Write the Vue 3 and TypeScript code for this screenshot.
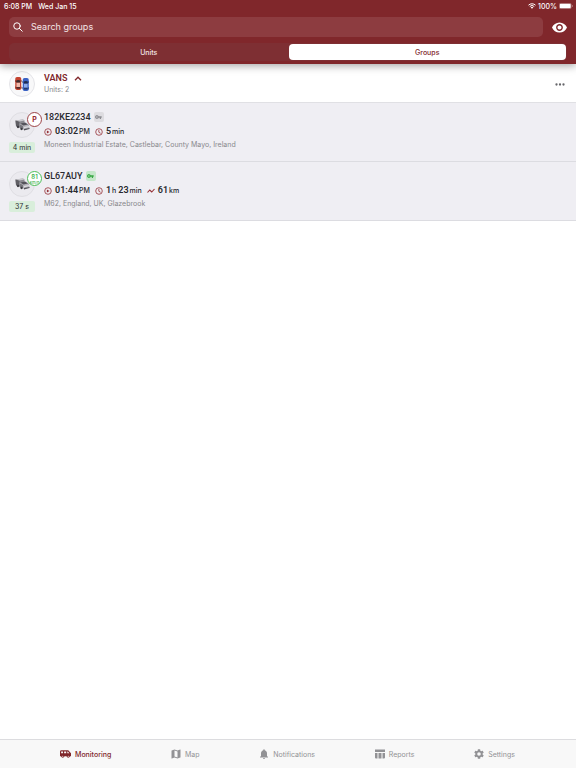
<script setup lang="ts">
import { ref } from 'vue'

interface Metric { icon: 'parking' | 'clock' | 'trip'; parts: [string, string][] }
interface Unit {
  name: string
  online: boolean
  badge: string[]
  age: string
  metrics: Metric[]
  address: string
}

const query = ref('')
const mode = ref<'Units' | 'Groups'>('Groups')
const expanded = ref(true)
const active = ref('Monitoring')

const units: Unit[] = [
  {
    name: '182KE2234',
    online: false,
    badge: ['P'],
    age: '4 min',
    metrics: [
      { icon: 'parking', parts: [['03:02', 'PM']] },
      { icon: 'clock', parts: [['5', 'min']] },
    ],
    address: 'Moneen Industrial Estate, Castlebar, County Mayo, Ireland',
  },
  {
    name: 'GL67AUY',
    online: true,
    badge: ['81', 'km/h'],
    age: '37 s',
    metrics: [
      { icon: 'parking', parts: [['01:44', 'PM']] },
      { icon: 'clock', parts: [['1', 'h'], ['23', 'min']] },
      { icon: 'trip', parts: [['61', 'km']] },
    ],
    address: 'M62, England, UK, Glazebrook',
  },
]

const tabs = ['Monitoring', 'Map', 'Notifications', 'Reports', 'Settings']
</script>

<template>
  <div class="app">
    <header class="top">
      <div class="status">
        <span>6:08 PM</span>
        <span>Wed Jan 15</span>
        <span class="status-right">
          <svg class="wifi" viewBox="0 0 16 12"><path d="M1 4.4a10 10 0 0 1 14 0M3.5 7a6.4 6.4 0 0 1 9 0" fill="none" stroke="currentColor" stroke-width="2" /><path d="M5.4 8.8a3.8 3.8 0 0 1 5.2 0L8 11.6z" fill="currentColor" /></svg>
          <span>100%</span>
          <svg class="battery" viewBox="0 0 28 12"><rect x=".5" y=".5" width="24" height="11" rx="3" fill="none" stroke="currentColor" opacity=".5" /><rect x="1.5" y="1.5" width="22" height="9" rx="2" fill="currentColor" /><path d="M26 4v4c2-.6 2-3.400 0-4z" fill="currentColor" opacity=".6" /></svg>
        </span>
      </div>
      <div class="search-row">
        <label class="search">
          <svg viewBox="0 0 20 20" fill="none" stroke="currentColor" stroke-width="2" stroke-linecap="round"><circle cx="8" cy="8" r="6.500" /><path d="M12.700 12.700 18.500 18.500" /></svg>
          <input v-model="query" type="text" placeholder="Search groups" aria-label="Search groups" />
        </label>
        <button class="eye" aria-label="Visibility">
          <svg viewBox="1 4 22 16"><path fill="currentColor" d="M12 4.500C7 4.500 2.730 7.610 1 12c1.730 4.390 6 7.500 11 7.500s9.270-3.110 11-7.500c-1.730-4.390-6-7.500-11-7.500zM12 17c-2.760 0-5-2.240-5-5s2.240-5 5-5 5 2.240 5 5-2.240 5-5 5zm0-8a3 3 0 1 0 0 6 3 3 0 0 0 0-6z" /></svg>
        </button>
      </div>
      <div class="segments">
        <button :class="{ on: mode === 'Units' }" @click="mode = 'Units'">Units</button>
        <button :class="{ on: mode === 'Groups' }" @click="mode = 'Groups'">Groups</button>
      </div>
    </header>

    <main class="content">
      <section class="group">
        <div class="avatar">
          <svg class="cars" viewBox="0 0 28 28">
            <g fill="#4a3a3c"><rect x="0" y="6" width="13" height="4" rx="1" /><rect x="0" y="19" width="13" height="4" rx="1" /></g>
            <g fill="#2d3554"><rect x="15" y="8" width="13" height="4" rx="1" /><rect x="15" y="20" width="13" height="4" rx="1" /></g>
            <rect x=".5" y="0" width="12" height="26" rx="3.500" fill="#c4432f" /><path d="M2 7.500q4.500-3 9 0l-1 4H3z" fill="#3c2a2e" /><rect x="3" y="11.500" width="7" height="8.500" fill="#efb9ab" /><path d="M2.500 20h8l-.5 3.500H3z" fill="#54292a" />
            <rect x="15.500" y="2" width="12" height="26" rx="3.500" fill="#3a62c4" /><path d="M17 9.500q4.500-3 9 0l-1 4h-7z" fill="#202b4d" /><rect x="18" y="13.500" width="7" height="8" fill="#8fadea" /><path d="M17.500 21.500h8l-.5 3.500h-7z" fill="#253765" />
          </svg>
        </div>
        <div class="group-info">
          <button class="group-name" :aria-expanded="expanded" @click="expanded = !expanded">
            <span>VANS</span>
            <svg :class="{ closed: !expanded }" viewBox="0 0 16 10"><path d="M2 8.500 8 2.500 14 8.500" fill="none" stroke="currentColor" stroke-width="2.600" /></svg>
          </button>
          <div class="group-count">Units: 2</div>
        </div>
        <button class="more" aria-label="More">
          <svg viewBox="0 0 20 6" fill="currentColor"><circle cx="3" cy="3" r="2.300" /><circle cx="10" cy="3" r="2.300" /><circle cx="17" cy="3" r="2.300" /></svg>
        </button>
      </section>

      <ul v-if="expanded" class="units">
        <li v-for="u in units" :key="u.name" class="unit">
          <div class="unit-side">
            <div class="avatar">
              <svg class="van" viewBox="0 0 30 26">
                <path d="M1 3 16 1l3 2v13l-8 2L2 15z" fill="#8b8a90" />
                <path d="m1 3 8 2v12l-7-3z" fill="#5f5e64" />
                <path d="M1 3 16 1l3 2-10 2z" fill="#c9c8cd" />
                <path d="m9 9 11-2 8 4 1 8-10 3-9-3z" fill="#b3b2b8" />
                <path d="m10 9 10-2 6 4-9 2z" fill="#54535a" />
                <path d="m10 11 6 3v7l-6-3z" fill="#77767c" />
                <path d="m18 16 10-2v2l-10 3z" fill="#dedde1" />
                <path d="m18 20 11-2v2l-11 3z" fill="#55545a" />
                <circle cx="6" cy="16" r="2.300" fill="#3b3a40" /><circle cx="13" cy="20" r="2.300" fill="#3b3a40" />
              </svg>
              <div class="badge" :class="{ moving: u.online }"><span v-for="b in u.badge" :key="b">{{ b }}</span></div>
            </div>
            <span class="age">{{ u.age }}</span>
          </div>
          <div class="unit-info">
            <div class="unit-name">
              <span>{{ u.name }}</span>
              <span class="key" :class="{ live: u.online }">
                <svg viewBox="0 0 22 12"><path fill="currentColor" fill-rule="evenodd" d="M11.700 4A6 6 0 1 0 11.700 8H15v4h4V8h2V4zM6 8a2 2 0 1 1 0-4 2 2 0 0 1 0 4z" /></svg>
              </span>
            </div>
            <div class="metrics">
              <span v-for="m in u.metrics" :key="m.icon" class="metric">
                <svg v-if="m.icon === 'parking'" viewBox="0 0 16 16"><circle cx="8" cy="8" r="6.600" fill="none" stroke="currentColor" stroke-width="1.600" /><path d="M5.800 4.800 11 8l-5.200 3.200z" fill="currentColor" /></svg>
                <svg v-else-if="m.icon === 'clock'" viewBox="0 0 16 16" fill="none" stroke="currentColor" stroke-width="1.600"><circle cx="8" cy="8" r="6.600" /><path d="M7.700 4v4.500l3.500 2" /></svg>
                <svg v-else viewBox="0 0 16 16" fill="none" stroke="currentColor" stroke-width="2.200"><path d="m1 11 4.500-5 4 4L15 4" /></svg>
                <span class="parts">
                  <span v-for="p in m.parts" :key="p[1]" class="part"><b>{{ p[0] }}</b><small>{{ p[1] }}</small></span>
                </span>
              </span>
            </div>
            <div class="address">{{ u.address }}</div>
          </div>
        </li>
      </ul>
    </main>

    <nav class="tabbar">
      <button v-for="t in tabs" :key="t" :class="{ on: active === t }" @click="active = t">
        <svg v-if="t === 'Monitoring'" class="bus" viewBox="0 0 24 16"><path fill="currentColor" fill-rule="evenodd" d="M3 0h15l6 6.500V13H0V3a3 3 0 0 1 3-3zm-.5 2.500v4h4v-4zm6.500 0v4h4.500v-4zm7 0v4h4.500l-3.500-4z" /><g fill="currentColor"><circle cx="6" cy="12.800" r="3.200" /><circle cx="18" cy="12.800" r="3.200" /></g><g fill="#f8f8f8"><circle cx="6" cy="12.800" r="1.200" /><circle cx="18" cy="12.800" r="1.200" /></g></svg>
        <svg v-else-if="t === 'Map'" viewBox="2 2 20 20"><path fill="currentColor" d="m20.500 3-.16.030L15 5.100 9 3 3.360 4.900a.5.5 0 0 0-.36.480V20.500a.5.5 0 0 0 .66.470L9 18.900l6 2.100 5.640-1.900a.5.5 0 0 0 .36-.480V3.500a.5.5 0 0 0-.5-.5zM15 19l-6-2.110V5l6 2.110z" /></svg>
        <svg v-else-if="t === 'Notifications'" viewBox="2 2 20 20"><path fill="currentColor" d="M12 22a2 2 0 0 0 2-2h-4a2 2 0 0 0 2 2zm6-6v-5c0-3.070-1.640-5.640-4.500-6.320V4a1.500 1.500 0 0 0-3 0v.680C7.630 5.360 6 7.920 6 11v5l-2 2v1h16v-1z" /></svg>
        <svg v-else-if="t === 'Reports'" viewBox="2 2 20 20"><path fill="currentColor" d="M2 3h20v5H2zM2 10h5v11H4a2 2 0 0 1-2-2zM9 10h6v11H9zM17 10h5v9a2 2 0 0 1-2 2h-3z" /></svg>
        <svg v-else viewBox="2 2 20 20"><path fill="currentColor" d="M19.140 12.940c.040-.3.060-.610.060-.940s-.020-.640-.070-.940l2.030-1.580a.49.49 0 0 0 .12-.610l-1.920-3.320a.49.49 0 0 0-.59-.220l-2.390.960a7 7 0 0 0-1.620-.940l-.36-2.540a.48.48 0 0 0-.48-.410h-3.840a.48.48 0 0 0-.47.410l-.36 2.540a7.300 7.300 0 0 0-1.620.940l-2.390-.960a.48.48 0 0 0-.59.220L2.740 8.870a.48.48 0 0 0 .12.610l2.030 1.580a6 6 0 0 0 0 1.880l-2.030 1.580a.49.49 0 0 0-.12.610l1.920 3.320c.12.220.37.290.59.220l2.390-.960c.5.380 1.030.700 1.620.940l.36 2.540c.050.240.240.410.480.410h3.840c.240 0 .440-.170.470-.410l.36-2.540a7 7 0 0 0 1.620-.940l2.390.960c.220.080.470 0 .590-.220l1.920-3.320a.48.48 0 0 0-.12-.610zM12 15.600a3.600 3.600 0 1 1 0-7.200 3.600 3.600 0 0 1 0 7.200z" /></svg>
        <span>{{ t }}</span>
      </button>
    </nav>
  </div>
</template>

<style>
body { margin: 0; background: #fff; }
</style>

<style scoped>
.app {
  min-height: 100vh;
  display: flex;
  flex-direction: column;
  font-family: Inter, Roboto, sans-serif;
  color: #29292e;
}
svg { display: block; flex: none; }
button {
  border: 0;
  padding: 0;
  background: none;
  font: inherit;
  color: inherit;
  cursor: pointer;
}
.top {
  position: sticky;
  top: 0;
  z-index: 2;
  background: #80272b;
  color: #fff;
  padding-bottom: 3px;
  box-shadow: 0 2px 8px rgba(0, 0, 0, .35);
}
.status {
  display: flex;
  align-items: center;
  gap: 6px;
  height: 12px;
  padding: 0 3px 0 4px;
  font-size: 7px;
  font-weight: 500;
}
.status-right { display: flex; align-items: center; gap: 2px; margin-left: auto; }
.wifi { width: 8px; height: 6px; }
.battery { width: 14px; height: 6px; }
.search-row {
  display: flex;
  align-items: center;
  gap: 9px;
  padding: 5px 9px 0;
}
.search {
  flex: 1;
  display: flex;
  align-items: center;
  gap: 8px;
  height: 20px;
  padding-left: 4px;
  border-radius: 5px;
  background: #8d3c40;
}
.search svg { width: 10px; height: 10px; }
.search input {
  flex: 1;
  min-width: 0;
  height: 18px;
  padding: 0 0 2px;
  box-sizing: border-box;
  border: 0;
  outline: 0;
  background: none;
  font: 9px Inter, Roboto, sans-serif;
  color: #fff;
}
.search input::placeholder { color: #f3e5e6; opacity: 1; }
.eye svg { width: 15px; height: 11px; }
.segments {
  display: flex;
  gap: 1px;
  height: 16px;
  margin: 6px 9px 0;
  padding: 1px;
  border-radius: 5px;
  background: #7e2f33;
}
.segments button {
  flex: 1;
  border-radius: 4px;
  font-size: 7px;
  font-weight: 500;
  color: #f3e5e6;
}
.segments .on { background: #fff; color: #80272b; }
.content { flex: 1; }
.group {
  display: flex;
  align-items: center;
  gap: 9px;
  height: 36px;
  padding: 2px 11px 0 9px;
  border-bottom: 1px solid #e0e0e4;
}
.avatar {
  position: relative;
  display: grid;
  place-items: center;
  box-sizing: border-box;
  width: 26px;
  height: 26px;
  border: 1px solid #e4e4e8;
  border-radius: 50%;
  background: #f8f8f9;
}
.cars { width: 14px; height: 14px; }
.van { width: 15px; height: 13px; }
.group-info { flex: 1; }
.group-name {
  display: flex;
  align-items: center;
  gap: 7px;
  font-family: Roboto, Inter, sans-serif;
  font-size: 9px;
  line-height: 12px;
  font-weight: 600;
  color: #80272b;
}
.group-name svg { width: 8px; height: 5px; }
.closed { transform: rotate(180deg); }
.group-count { font-size: 7px; line-height: 12px; color: #88888c; }
.more { color: #66666a; }
.more svg { width: 10px; height: 3px; }
.units { margin: 0; padding: 0; list-style: none; }
.unit {
  display: flex;
  gap: 9px;
  padding: 8px 9px;
  border-bottom: 1px solid #dcdce1;
  background: #efeef3;
}
.unit-side {
  display: flex;
  flex-direction: column;
  align-items: center;
  gap: 4px;
  width: 26px;
  padding-top: 1px;
}
.unit .avatar { border-color: #dfdee3; background: #ebeaef; }
.badge {
  position: absolute;
  top: -1px;
  right: -8px;
  display: flex;
  flex-direction: column;
  align-items: center;
  justify-content: center;
  box-sizing: border-box;
  width: 15px;
  height: 15px;
  border: 1px solid #9c4448;
  border-radius: 50%;
  background: #fff;
  font-size: 7px;
  line-height: 7px;
  font-weight: 700;
  color: #9a2c32;
}
.moving { border-color: #4fbf5a; color: #43b54f; font-size: 6px; font-weight: 600; }
.moving span + span { font-size: 4px; line-height: 5px; font-weight: 500; }
.age {
  align-self: stretch;
  border-radius: 2px;
  background: #d9eedb;
  font-size: 7px;
  line-height: 11px;
  text-align: center;
}
.unit-info { flex: 1; min-width: 0; }
.unit-name {
  display: flex;
  align-items: center;
  gap: 3px;
  font-family: Roboto, Inter, sans-serif;
  font-size: 9px;
  line-height: 12px;
  font-weight: 500;
}
.key {
  display: grid;
  place-items: center;
  width: 10px;
  height: 10px;
  border-radius: 2px;
  background: #dddce0;
  color: #8c8c91;
}
.key svg { width: 7px; height: 4px; }
.live { background: #c5e6ca; color: #38a845; }
.metrics { display: flex; gap: 5px; line-height: 16px; }
.metric { display: flex; align-items: center; gap: 3px; }
.metric svg { width: 8px; height: 8px; color: #963137; }
.parts { display: flex; gap: 2px; }
.part { display: flex; align-items: baseline; gap: 1px; }
.part b { font-family: Roboto, Inter, sans-serif; font-size: 9px; font-weight: 600; }
.part small { font-size: 7px; font-weight: 500; }
.address { font-size: 7px; line-height: 10px; color: #88888c; }
.tabbar {
  position: sticky;
  bottom: 0;
  display: flex;
  justify-content: space-between;
  height: 28px;
  padding: 0 61px 0 60px;
  border-top: 1px solid #dcdcdf;
  background: #f8f8f8;
  color: #929295;
}
.tabbar button { display: flex; align-items: center; gap: 4px; font-size: 7px; }
.tabbar svg { width: 10px; height: 10px; }
.tabbar .bus { width: 11px; height: 8px; }
.tabbar .on { color: #80272b; font-weight: 500; }
</style>
